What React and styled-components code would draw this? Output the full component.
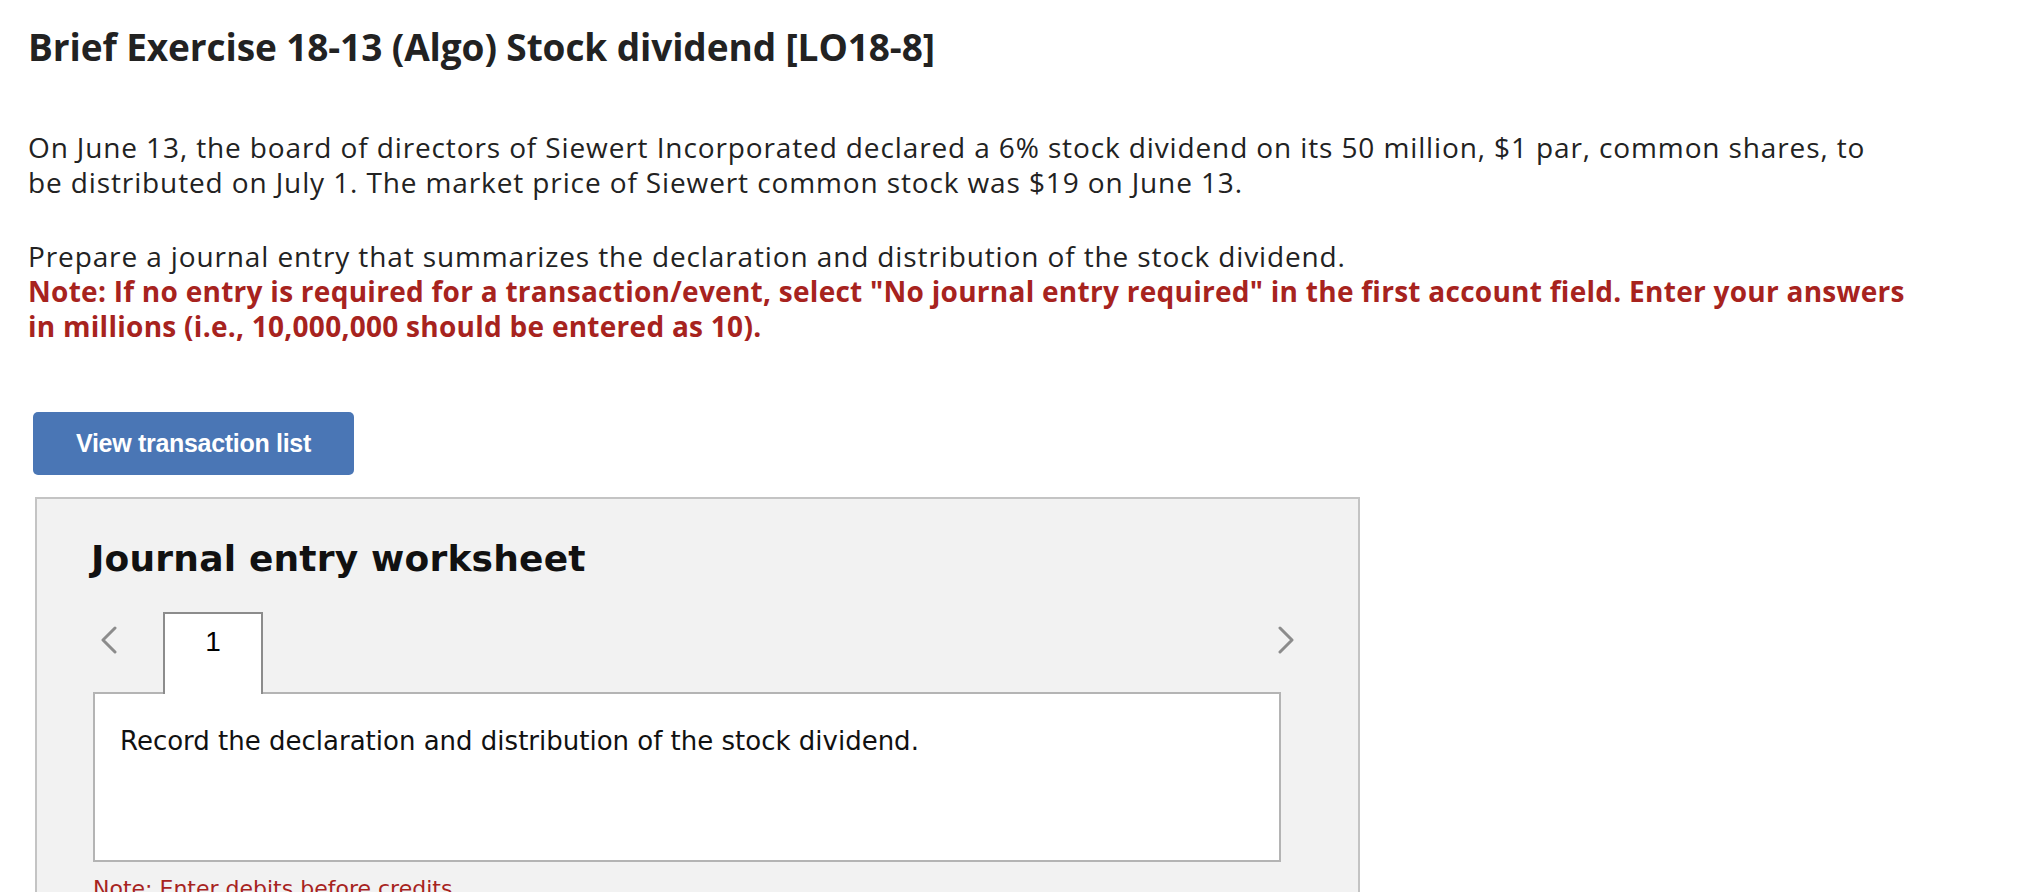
import styled, { createGlobalStyle } from 'styled-components';

const GlobalStyle = createGlobalStyle`
  body {
    margin: 0;
    background: #ffffff;
    font-family: 'Open Sans', 'Liberation Sans', sans-serif;
    color: #222222;
  }
`;

const Page = styled.div`
  padding: 22px 0 0 28px;
  width: 1960px;
`;

const Title = styled.h1`
  margin: 0;
  font-size: 37px;
  line-height: 50px;
  font-weight: 700;
  letter-spacing: -0.1px;
  color: #222222;
`;

const Paragraph = styled.p`
  margin: ${(p) => p.$top || 0}px 0 0;
  font-size: 28px;
  line-height: 35px;
  letter-spacing: 0.88px;
`;

const Warning = styled.span`
  display: block;
  color: #a7231e;
  font-weight: 700;
  letter-spacing: 0.27px;
`;

const ViewButton = styled.button`
  display: block;
  margin: 68px 0 0 5px;
  width: 321px;
  height: 63px;
  border: none;
  border-radius: 5px;
  background: #4a76b5;
  color: #ffffff;
  font-family: 'Liberation Sans', Arial, sans-serif;
  font-weight: 700;
  font-size: 25px;
  letter-spacing: -0.3px;
  cursor: pointer;
`;

const Worksheet = styled.section`
  margin: 22px 0 0 7px;
  width: 1325px;
  box-sizing: border-box;
  border: 2px solid #c4c4c4;
  background: #f2f2f2;
  padding: 38px 77px 40px 56px;
  font-family: 'DejaVu Sans', Verdana, sans-serif;
`;

const WorksheetTitle = styled.h2`
  margin: 0 0 0 -2px;
  font-size: 36px;
  line-height: 44px;
  font-weight: 700;
  letter-spacing: 0.2px;
  color: #111111;
`;

const TabBar = styled.div`
  display: flex;
  align-items: flex-start;
  margin: 31px -21px 0 0;
`;

const ArrowButton = styled.button`
  display: flex;
  align-items: center;
  justify-content: center;
  width: 30px;
  height: 30px;
  margin-top: 13px;
  padding: 0;
  border: none;
  background: transparent;
  color: #8c8c8c;
  cursor: pointer;
  margin-left: ${(p) => (p.$right ? 'auto' : '0')};
`;

const Tab = styled.div`
  position: relative;
  z-index: 1;
  margin: 0 0 -2px 40px;
  width: 100px;
  height: 82px;
  box-sizing: border-box;
  border: 2px solid #8c8c8c;
  border-bottom: none;
  background: #ffffff;
  text-align: center;
  padding-top: 12px;
  font-family: 'Liberation Sans', Arial, sans-serif;
  font-size: 28px;
  line-height: 32px;
  color: #000000;
`;

const EntryBox = styled.div`
  height: 170px;
  box-sizing: border-box;
  border: 2px solid #b4b4b4;
  background: #ffffff;
  padding: 30px 25px;
  font-size: 26px;
  line-height: 34px;
  color: #111111;
`;

const Note = styled.p`
  margin: 14px 0 0;
  font-size: 22px;
  line-height: 26px;
  color: #a7231e;
`;

function Chevron({ dir }) {
  const d = dir === 'left' ? 'M16 2 L4 14 L16 26' : 'M2 2 L14 14 L2 26';
  return (
    <svg width="18" height="28" viewBox="0 0 18 28" fill="none">
      <path d={d} stroke="currentColor" strokeWidth="3" strokeLinecap="round" strokeLinejoin="round" />
    </svg>
  );
}

export default function App() {
  return (
    <>
      <GlobalStyle />
      <Page>
        <Title>Brief Exercise 18-13 (Algo) Stock dividend [LO18-8]</Title>
        <Paragraph $top={58}>
          On June 13, the board of directors of Siewert Incorporated declared a 6% stock dividend on its 50 million, $1 par, common shares, to
          <br />
          be distributed on July 1. The market price of Siewert common stock was $19 on June 13.
        </Paragraph>
        <Paragraph $top={39}>
          Prepare a journal entry that summarizes the declaration and distribution of the stock dividend.
          <Warning>
            Note: If no entry is required for a transaction/event, select "No journal entry required" in the first account field. Enter your answers
            <br />
            in millions (i.e., 10,000,000 should be entered as 10).
          </Warning>
        </Paragraph>
        <ViewButton>View transaction list</ViewButton>
        <Worksheet>
          <WorksheetTitle>Journal entry worksheet</WorksheetTitle>
          <TabBar>
            <ArrowButton aria-label="Previous">
              <Chevron dir="left" />
            </ArrowButton>
            <Tab>1</Tab>
            <ArrowButton $right aria-label="Next">
              <Chevron dir="right" />
            </ArrowButton>
          </TabBar>
          <EntryBox>Record the declaration and distribution of the stock dividend.</EntryBox>
          <Note>Note: Enter debits before credits.</Note>
        </Worksheet>
      </Page>
    </>
  );
}
